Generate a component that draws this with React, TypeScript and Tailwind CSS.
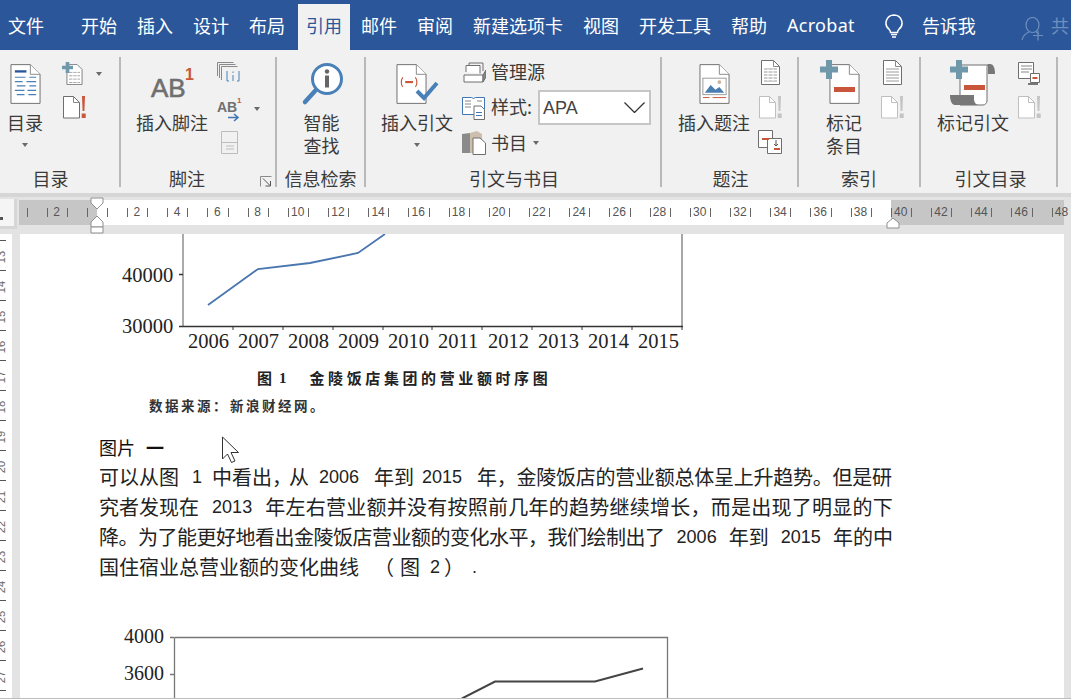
import type { ReactNode } from "react";

const tabsLeft = ["开始", "插入", "设计", "布局"];
const tabsRight = ["邮件", "审阅", "新建选项卡", "视图", "开发工具", "帮助"];

const Caret = () => <span className="block w-0 h-0 border-x-[3.5px] border-x-transparent border-t-[4px] border-t-[#6a6a6a]" />;

const Page = ({ children }: { children?: ReactNode }) => (
  <svg width="31" height="42" viewBox="0 0 32 42" fill="none" className="block">
    <path d="M1 1h20l10 10v30H1z" fill="#fff" stroke="#6e6e6e" />
    <path d="M21 1v10h10" fill="#fff" stroke="#8a8a8a" />
    {children}
  </svg>
);

const LinesDoc = ({ dense }: { dense?: boolean }) => (
  <svg width="19" height="25" viewBox="0 0 19 25" fill="none" className="block">
    <path d="M.5.5h12l6 6v18H.5z" fill="#fff" stroke="#6e6e6e" />
    <path d="M12.5.5v6h6" stroke="#8a8a8a" />
    <path d="M3 9h13M3 12h13M3 15h13M3 18h13M3 21h13" stroke="#9a9a9a" />
    {dense && <path d="M7 9v12M12 9v12" stroke="#fff" />}
  </svg>
);

const BangDoc = ({ dim }: { dim?: boolean }) => (
  <svg width="24" height="23" viewBox="0 0 24 23" fill="none" className="block">
    <path d="M.5.5h10l6 6v15.5H.5z" fill="#fff" stroke={dim ? "#bfbfbf" : "#6e6e6e"} />
    <path d="M10.5.5v6h6" stroke={dim ? "#bfbfbf" : "#8a8a8a"} />
    <path d="M20.5 0l.6 15h1.8l.6-15zM20.2 17.5h4v4.5h-4z" transform="translate(-1.5 0)" fill={dim ? "#c4c4c4" : "#c9563a"} />
  </svg>
);

const Plus = () => (
  <svg width="18" height="19" viewBox="0 0 18 19" className="absolute left-0 top-0">
    <path d="M6 0h6v6.5h6v6h-6V19H6v-6.5H0v-6h6z" fill="#6f98ab" />
  </svg>
);

const Group = ({ title, titleClass = "", w, children, launcher }: { title: string; titleClass?: string; w: string; children: ReactNode; launcher?: boolean }) => (
  <div className={`${w} relative shrink-0 h-[130px] flex flex-col border-r-[2px] border-r-[#b9b9b9]`}>
    <div className="flex-1 flex min-h-0 pt-[6px]">{children}</div>
    <div className={`${titleClass} h-[24px] text-center text-[18px] leading-[30px] text-[#3a3a3a] whitespace-nowrap`}>{title}</div>
    {launcher && (
      <svg width="12" height="11" viewBox="0 0 12 11" fill="none" className="absolute right-[3px] bottom-[0px]">
        <path d="M.5 10.500V.5h11" stroke="#8a8a8a" />
        <path d="M3 2.500l7 7M10.500 5v5h-5" stroke="#555" />
      </svg>
    )}
  </div>
);

const Big = ({ label, w, caret, icon }: { label: ReactNode; w: string; caret?: boolean; icon: ReactNode }) => (
  <div className={`${w} shrink-0 flex flex-col items-center`}>
    <div className="h-[45px] flex items-start justify-center">{icon}</div>
    <div className="mt-[3px] text-center text-[18px] leading-[23px] text-[#3a3a3a] whitespace-nowrap">{label}</div>
    {caret && <div className="mt-[9px]"><Caret /></div>}
  </div>
);

const rulerLabels = Array.from({ length: 26 }).map((_, i) => (i === 0 ? "2" : i === 1 ? "" : String((i - 1) * 2)));

const Ruler = () => (
  <div className="h-[37px] bg-[#e3e3e3] flex items-start pt-[2px] relative">
    <div className="w-[17px] h-[30px] mr-[2px] bg-[#f5f5f5] border-r-[3px] border-b-[3px] border-[#d6d6d6] shrink-0 relative">
      <span className="absolute left-0 top-[18px] w-[3px] h-[3px] bg-[#555]" />
    </div>
    <div className="flex h-[25px] mt-[1px]">
      <div className="w-[78px] bg-[#c6c6c6] shrink-0" />
      <div className="w-[794px] bg-white shrink-0" />
      <div className="w-[173px] bg-[#c6c6c6] shrink-0" />
    </div>
    <div className="absolute left-0 top-[3px] h-[25px] w-full text-[12px] leading-[25px] text-[#555] font-['Liberation_Sans',sans-serif]">
      {rulerLabels.map((t, i) => (
        <span key={i} className="absolute top-0 text-center w-[20px]" style={{ left: 46.5 + i * 40.2 }}>
          {t}
        </span>
      ))}
      {Array.from({ length: 52 }).map((_, i) => (
        <span key={i} className="absolute top-[8px] h-[9px] w-px bg-[#666]" style={{ left: 26.5 + i * 20.1 }} />
      ))}
    </div>
    <svg width="14" height="37" viewBox="0 0 14 37" className="absolute left-[90px] top-0" fill="#fff" stroke="#8f8f8f">
      <path d="M1 1h12v5l-6 6-6-6z" />
      <path d="M7 19l6 6v5H1v-5z" />
      <path d="M1 30h12v6H1z" />
    </svg>
    <svg width="14" height="12" viewBox="0 0 14 12" className="absolute left-[886px] top-[20px]" fill="#fff" stroke="#8f8f8f">
      <path d="M7 1l6 5v5H1V6z" />
    </svg>
  </div>
);

const years = [2006, 2007, 2008, 2009, 2010, 2011, 2012, 2013, 2014, 2015];

const Chart1 = () => (
  <svg width="600" height="125" viewBox="0 0 600 125" className="block shrink-0" fill="none">
    <path d="M84 0v92" stroke="#aaa" strokeWidth="2" />
    <path d="M583 0v92" stroke="#777" strokeWidth="1.300" />
    <path d="M80 92.500h504M80 40.500h4" stroke="#333" strokeWidth="1.300" />
    {[134, 184, 234, 284, 333, 383, 433, 483, 533, 583].map((x) => (
      <path key={x} d={`M${x} 96v-4`} stroke="#333" />
    ))}
    <path d="M109 71l50-36 52-6 48-10 27-19" stroke="#4a76b0" strokeWidth="1.800" />
    <g className="font-['Liberation_Serif',serif] text-[20.500px]" fill="#222">
      <text x="23" y="48">40000</text>
      <text x="23" y="99">30000</text>
      {years.map((y, i) => (
        <text key={y} x={89 + i * 50} y="114">{y}</text>
      ))}
    </g>
  </svg>
);

const Chart2 = () => (
  <svg width="600" height="85" viewBox="0 0 600 85" fill="none" className="block shrink-0 mt-[32px]">
    <path d="M71 23.500h4M75.500 23.500h493v62M75.500 23.500v62M71 60.500h4" stroke="#777" strokeWidth="1.300" />
    <path d="M363 84.500l33-17 100 0 48-13" stroke="#444" strokeWidth="2" />
    <g className="font-['Liberation_Serif',serif] text-[20px]" fill="#222">
      <text x="25" y="29">4000</text>
      <text x="25" y="66">3600</text>
    </g>
  </svg>
);

const Num = ({ children, className = "" }: { children: ReactNode; className?: string }) => (
  <span className={`${className} font-['Liberation_Sans',sans-serif] text-[18px]`}>{children}</span>
);

export default function App() {
  return (
    <div className="w-[1071px] h-[699px] overflow-hidden bg-white font-['Noto_Sans_CJK_SC','Noto_Sans',sans-serif]">
      <div className="h-[50px] bg-[#2b579a] flex items-end text-white text-[18px] leading-[42px] overflow-hidden">
        <div className="w-[71px] h-[46px] pl-[8px]">文件</div>
        {tabsLeft.map((t) => (
          <div key={t} className="h-[46px] px-[10px] whitespace-nowrap">{t}</div>
        ))}
        <div className="w-[52px] h-[46px] ml-[3px] mr-[1px] bg-[#f1f1f1] text-[#2b579a] text-center">引用</div>
        {tabsRight.map((t) => (
          <div key={t} className="h-[46px] px-[10px] whitespace-nowrap">{t}</div>
        ))}
        <div className="h-[46px] pl-[10px] font-['Noto_Sans',sans-serif] tracking-[0.3px] whitespace-nowrap">Acrobat</div>
        <svg width="18" height="24" viewBox="0 0 18 24" fill="none" stroke="#fff" strokeWidth="1.500" className="ml-[30px] mb-[12px] shrink-0">
          <path d="M9 1a8 8 0 0 0-5 14.200c1 1 1.500 2 1.500 3.300h7c0-1.300.5-2.300 1.500-3.300A8 8 0 0 0 9 1z" />
          <path d="M6 20.500h6M7 23h4" />
        </svg>
        <div className="h-[46px] ml-[19px] whitespace-nowrap">告诉我</div>
        <svg width="23" height="24" viewBox="0 0 23 24" fill="none" stroke="#6f8fbd" strokeWidth="1.200" className="ml-[45px] mb-[9px] shrink-0">
          <ellipse cx="11.500" cy="8" rx="6.500" ry="7.500" />
          <path d="M8 15c-3.500 1.500-6 4-7 8M15 15c1 .5 2 1 3 2M17 13.500v10M12 18.500h10" />
        </svg>
        <div className="h-[46px] ml-[7px] text-[#6f8fbd] whitespace-nowrap">共</div>
      </div>

      <div className="h-[147px] bg-[#f1f1f1] border-b-[4px] border-b-[#d6d6d6] pt-[7px] flex">
        <Group title="目录" titleClass="pr-[18px]" w="w-[121px]">
          <Big w="w-[36px] ml-[7px]" label="目录" caret icon={
            <Page>
              <path d="M5 8h12" stroke="#2b579a" strokeWidth="2.400" />
              <path d="M5 14h11M20 14h7M5 18.500h8M17 18.500h10M7 23h9M20 23h7M5 27.500h10M18 27.500h9M7 32h8M19 32h8" stroke="#4a80b8" strokeWidth="1.200" />
            </Page>
          } />
          <div className="flex flex-col gap-[10px] pl-[19px] -mt-[1px]">
            <div className="flex items-center gap-[10px] h-[24px]">
              <span className="relative block w-[24px] h-[24px]">
                <svg width="17" height="21" viewBox="0 0 19 25" fill="none" className="absolute left-[4px] top-[2px]">
                  <path d="M.5.5h12l6 6v18H.5z" fill="#fff" stroke="#6e6e6e" />
                  <path d="M3 10h13M3 14h13M3 18h13M3 22h13" stroke="#9a9a9a" strokeDasharray="4 1" />
                </svg>
                <svg width="11" height="11" viewBox="0 0 18 18" className="absolute left-0 top-0"><path d="M6 0h6v6h6v6h-6v6H6v-6H0V6h6z" fill="#6f98ab" /></svg>
              </span>
              <Caret />
            </div>
            <span className="block ml-[1px]"><BangDoc /></span>
          </div>
        </Group>

        <Group title="脚注" titleClass="pr-[22px]" w="w-[156px]" launcher>
          <Big w="w-[72px] ml-[15px]" label="插入脚注" icon={
            <span className="relative block w-[44px] h-[45px] font-['Liberation_Sans',sans-serif]">
              <span className="absolute left-[1px] top-[10px] text-[26px] leading-[30px] text-[#6f6f6f] [-webkit-text-stroke:0.6px_#6f6f6f]">AB</span>
              <span className="absolute left-[35px] top-[4px] text-[16px] leading-[16px] font-bold text-[#c9563a]">1</span>
            </span>
          } />
          <div className="flex flex-col gap-[9px] pl-[9px] -mt-[1px]">
            <svg width="24" height="24" viewBox="0 0 24 24" fill="none" stroke="#8a8a8a" className="block">
              <path d="M.5 14V.5h16M2.500 16V2.500h16M4.500 18V4.500h16" />
              <path d="M10 9v10h2M22 9v10h-2" stroke="#4a80b8" />
              <path d="M16 13v6M16 9.500v1.500" stroke="#4a80b8" />
            </svg>
            <div className="flex items-center gap-[10px] h-[27px]">
              <span className="relative block w-[27px] h-[24px] font-['Liberation_Sans',sans-serif]">
                <span className="absolute left-0 top-[3px] text-[14px] leading-[14px] font-bold text-[#707070]">AB</span>
                <span className="absolute left-[20px] top-0 text-[8px] leading-[8px] font-bold text-[#c9563a]">1</span>
                <svg width="12" height="9" viewBox="0 0 12 9" fill="none" className="absolute left-[11px] top-[16px]"><path d="M0 4.500h10M6 1l4 3.500L6 8" stroke="#3f76b5" strokeWidth="1.600" /></svg>
              </span>
              <Caret />
            </div>
            <svg width="17" height="23" viewBox="0 0 17 23" fill="none" stroke="#bdbdbd" className="ml-[4px] block">
              <path d="M.5.5h16v22H.5zM.5 11.500h16M5 15h8M5 18h8" />
            </svg>
          </div>
        </Group>

        <Group title="信息检索" w="w-[89px]">
          <Big w="w-[87px] ml-[1px]" label={<>智能<br />查找</>} icon={
            <svg width="44" height="44" viewBox="0 0 44 44" fill="none" className="-mt-[1px] ml-[1px]">
              <circle cx="27" cy="17" r="14.500" fill="#fff" stroke="#4a80b8" strokeWidth="3" />
              <path d="M15 29L5 40" stroke="#4a80b8" strokeWidth="4.500" strokeLinecap="round" />
              <circle cx="27" cy="9.500" r="2.200" fill="#666" />
              <path d="M27 13.500v12" stroke="#666" strokeWidth="4" />
            </svg>
          } />
        </Group>

        <Group title="引文与书目" titleClass="pl-[2px]" w="w-[296px]">
          <Big w="w-[72px] ml-[15px]" label="插入引文" caret icon={
            <span className="block relative w-[43px] h-[43px]">
              <Page>
                <path d="M7 14c-2 3-2 8 0 10M20 14c2 3 2 8 0 10" stroke="#c9563a" strokeWidth="1.200" />
                <path d="M9.500 19h8" stroke="#c9563a" strokeWidth="2.200" />
              </Page>
              <svg width="24" height="20" viewBox="0 0 24 20" fill="none" className="absolute left-[19px] top-[18px]"><path d="M2 10l7 7L22 2" stroke="#4a80b8" strokeWidth="4" /></svg>
            </span>
          } />
          <div className="flex flex-col text-[18px] text-[#3a3a3a] leading-[22px] gap-[7px] pl-[9px] -mt-[2px]">
            <div className="flex items-center gap-[5px] h-[22px]">
              <svg width="24" height="21" viewBox="0 0 24 21" fill="none" stroke="#6e6e6e" className="shrink-0"><path d="M7 5V1h14v8" /><path d="M4 10V3.500h14v8" fill="#fff" /><path d="M2 13h19v7H2z" fill="#fff" /><path d="M21 13l3-5v7l-3 5z" fill="#888" /></svg>
              <span className="pb-[2px]">管理源</span>
            </div>
            <div className="flex items-center gap-[5px] h-[35px]">
              <svg width="24" height="24" viewBox="0 0 24 24" fill="none" className="shrink-0"><path d="M.5 1.500h9l2 1 2-1h9v17H.500z" fill="#fff" stroke="#3f76b5" /><path d="M3 5h6M3 8h6M3 11h6M15 5h5" stroke="#888" /><path d="M12 10h7l3.500 3.500V23.500H12z" fill="#fff" stroke="#6e6e6e" /><path d="M14 16.500h6M14 19.500h6" stroke="#3f76b5" /></svg>
              <span className="w-[40px] pb-[3px] whitespace-nowrap">样式:</span>
              <div className="ml-[2px] w-[113px] h-[35px] bg-white border-[2px] border-[#c6c6c6] flex items-center justify-between pl-[3px] pr-[4px] font-['Liberation_Sans',sans-serif] text-[#444]">
                <span>APA</span>
                <svg width="21" height="11" viewBox="0 0 21 11" fill="none"><path d="M.5.500l10 10 10-10" stroke="#333" strokeWidth="1.300" /></svg>
              </div>
            </div>
            <div className="flex items-center gap-[5px] h-[22px]">
              <svg width="24" height="24" viewBox="0 0 24 24" fill="none" className="shrink-0"><path d="M0 3l8-1v20H0z" fill="#8a8a8a" /><path d="M8 2l7-2 5 3v6h-6v13H8z" fill="#cdbfae" /><path d="M11 7h7l5.500 5v11.500H11z" fill="#fff" stroke="#6e6e6e" /></svg>
              <span className="pb-[2px]">书目</span>
              <span className="ml-[1px]"><Caret /></span>
            </div>
          </div>
        </Group>

        <Group title="题注" titleClass="pl-[2px]" w="w-[137px]">
          <Big w="w-[72px] ml-[16px]" label="插入题注" icon={
            <span className="block">
              <Page>
                <rect x="4" y="15" width="24" height="17" fill="#fff" stroke="#9a9a9a" />
                <path d="M6 30l6-8 5 5 4-3 5 6z" fill="#4a7db0" />
                <circle cx="21" cy="19" r="2" fill="#c9b39a" />
                <path d="M4 35h7M14 35h14" stroke="#c9563a" />
              </Page>
            </span>
          } />
          <div className="flex flex-col gap-[11px] pl-[8px] -mt-[3px]">
            <span className="block ml-[3px]"><LinesDoc dense /></span>
            <span className="block ml-[1px]"><BangDoc dim /></span>
            <svg width="24" height="24" viewBox="0 0 24 24" fill="none" className="block"><path d="M.5.5h14v17H.5z" fill="#fff" stroke="#6e6e6e" /><path d="M9.500 8.500h14v15h-14z" fill="#fff" stroke="#6e6e6e" /><path d="M4 9h7" stroke="#c9563a" strokeWidth="2" /><path d="M16 19h6" stroke="#c9563a" strokeWidth="2" /><path d="M18 10v6M16 14l2 2 2-2" stroke="#555" /></svg>
          </div>
        </Group>

        <Group title="索引" w="w-[122px]">
          <Big w="w-[36px] ml-[27px]" label={<>标记<br />条目</>} icon={
            <span className="relative block w-[40px] h-[45px] -mt-[3px] -ml-[8px]">
              <span className="absolute left-[9px] top-[3px]"><Page /></span>
              <Plus />
              <span className="absolute left-[14px] top-[27px] w-[21px] h-[5px] bg-[#c9563a]" />
            </span>
          } />
          <div className="flex flex-col gap-[11px] pl-[19px] -mt-[3px]">
            <span className="block ml-[2px]"><LinesDoc /></span>
            <BangDoc dim />
          </div>
        </Group>

        <Group title="引文目录" titleClass="pl-[4px]" w="w-[137px]">
          <Big w="w-[72px] ml-[16px]" label="标记引文" icon={
            <span className="relative block w-[46px] h-[45px] -mt-[3px]">
              <svg width="46" height="42" viewBox="0 0 46 42" fill="none" className="absolute left-0 top-[4px]">
                <path d="M38 0h2c3 0 5 3 5 10h-7z" fill="#777" />
                <path d="M10 1h28c-1 0-1 2-1 4v32c0 2-2 4-4 4H10z" fill="#fff" stroke="#6e6e6e" />
                <path d="M0 31h24v4c0 3 2 6 5 6H5c-3 0-5-4-5-10z" fill="#777" />
              </svg>
              <Plus />
              <span className="absolute left-[14px] top-[25px] w-[21px] h-[5px] bg-[#c9563a]" />
            </span>
          } />
          <div className="flex flex-col gap-[10px] pl-[9px] -mt-[1px]">
            <svg width="24" height="24" viewBox="0 0 24 24" fill="none" className="block"><path d="M.5.5h15v16H.5z" fill="#fff" stroke="#6e6e6e" /><path d="M3 4h11M3 7h11M3 10h8" stroke="#888" /><path d="M12.500 11.500h9v9h-9z" fill="#fff" stroke="#6e6e6e" /><path d="M14.500 16h5" stroke="#c9563a" strokeWidth="2" /><path d="M10 21h10v2H10z" fill="#777" /></svg>
            <BangDoc dim />
          </div>
        </Group>
      </div>

      <Ruler />

      <div className="flex h-[465px] border-b border-b-[#bdbdbd] overflow-hidden">
        <div className="w-[12px] shrink-0 relative bg-white overflow-hidden text-[11px] text-[#666] font-['Liberation_Sans',sans-serif]">
          {Array.from({ length: 16 }).map((_, i) => (
            <span key={i} className="absolute left-0 w-[6px] h-px bg-[#555]" style={{ top: 6 + i * 30 }} />
          ))}
          {Array.from({ length: 16 }).map((_, i) => (
            <span key={i} className="absolute left-[-7px] w-[16px] h-[12px] text-center leading-[12px] -rotate-90" style={{ top: 17 + i * 30 }}>{13 + i}</span>
          ))}
        </div>
        <div className="w-[8px] shrink-0 bg-[#e3e3e3]" />
        <div className="relative w-[1044px] shrink-0 bg-white flex flex-col items-start pl-[79px] overflow-hidden">
          <Chart1 />
          <div className="ml-[158px] mt-[9px] h-[20px] flex text-[15px] leading-[20px] font-bold text-[#222] whitespace-nowrap">
            <span>图</span>
            <span className="ml-[7px] font-['Liberation_Serif',serif]">1</span>
            <span className="ml-[23px] tracking-[3.600px]">金陵饭店集团的营业额时序图</span>
          </div>
          <div className="ml-[50px] mt-[7px] h-[20px] text-[13.500px] leading-[20px] font-bold text-[#333] tracking-[2.500px] whitespace-nowrap">
            <span>数据来源：</span>
            <span className="ml-[1px]">新浪财经网。</span>
          </div>
          <div className="mt-[17px] h-[30px] flex text-[18px] leading-[30px] text-[#111] whitespace-nowrap">
            <span>图片</span>
            <span className="ml-[11px] font-bold">一</span>
          </div>
          {/* mouse pointer from the screen capture */}
          <svg width="19" height="28" viewBox="0 0 19 28" fill="#fff" stroke="#333" className="absolute left-[201px] top-[202px]">
            <path d="M1.500 1v22l5-5 4 8.500 3.500-1.500-4-8.500h7.500z" />
          </svg>
          <div className="w-[794px] text-[20px] leading-[30px] text-[#222]">
            <div className="flex whitespace-nowrap">
              <span>可以从图</span>
              <Num className="ml-[13px] w-[10px]">1</Num>
              <span className="ml-[10px] -mr-[3px]">中看出，</span>
              <span>从</span>
              <Num className="ml-[10px]">2006</Num>
              <span className="ml-[15px]">年到</span>
              <Num className="ml-[8px]">2015</Num>
              <span className="ml-[15px] tracking-[-0.250px]">年，金陵饭店的营业额总体呈上升趋势。但是研</span>
            </div>
            <div className="flex justify-between whitespace-nowrap">
              <span>究者发现在</span>
              <Num>2013</Num>
              <span className="tracking-[0.250px]">年左右营业额并没有按照前几年的趋势继续增长，而是出现了明显的下</span>
            </div>
            <div className="flex justify-between whitespace-nowrap">
              <span className="tracking-[-0.500px]">降。为了能更好地看出金陵饭店营业额的变化水平，我们绘制出了</span>
              <Num>2006</Num>
              <span>年到</span>
              <Num>2015</Num>
              <span>年的中</span>
            </div>
            <div className="flex whitespace-nowrap">
              <span>国住宿业总营业额的变化曲线</span>
              <span className="ml-[15px]">（</span>
              <span className="ml-[6px]">图</span>
              <Num className="ml-[10px]">2</Num>
              <span className="ml-[4px]">）</span>
              <Num className="ml-[8px]">.</Num>
            </div>
          </div>
          <Chart2 />
        </div>
        <div className="flex-1 bg-[#e3e3e3]" />
      </div>
    </div>
  );
}
